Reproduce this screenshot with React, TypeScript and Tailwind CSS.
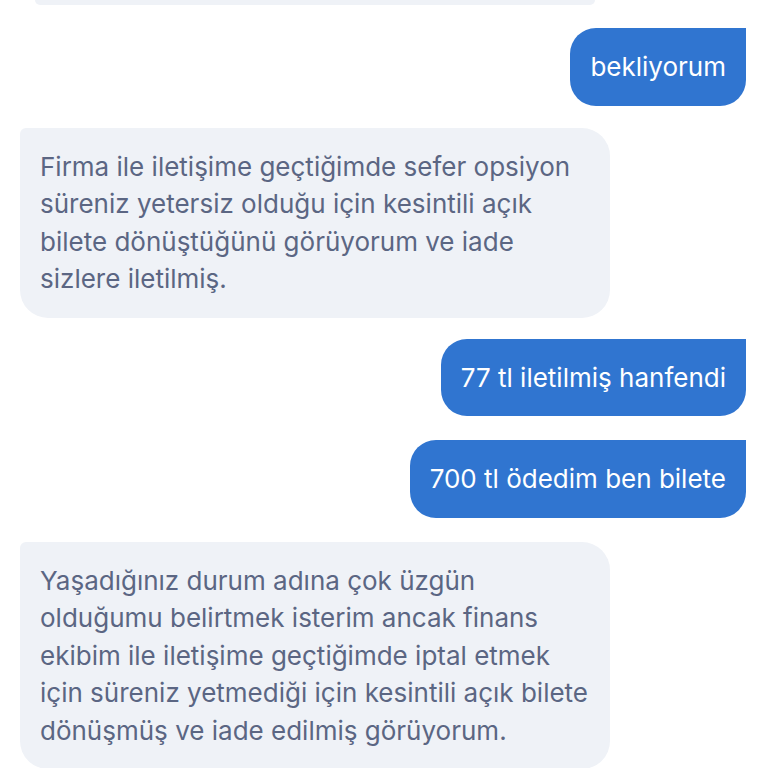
type Msg = { from: 'agent' | 'user'; text: string; mt: string }

const messages: Msg[] = [
  { from: 'user', text: 'bekliyorum', mt: 'mt-[23px]' },
  {
    from: 'agent',
    text: 'Firma ile iletişime geçtiğimde sefer opsiyon süreniz yetersiz olduğu için kesintili açık bilete dönüştüğünü görüyorum ve iade sizlere iletilmiş.',
    mt: 'mt-[22px]',
  },
  { from: 'user', text: '77 tl iletilmiş hanfendi', mt: 'mt-[21px]' },
  { from: 'user', text: '700 tl ödedim ben bilete', mt: 'mt-[24px]' },
  {
    from: 'agent',
    text: 'Yaşadığınız durum adına çok üzgün olduğumu belirtmek isterim ancak finans ekibim ile iletişime geçtiğimde iptal etmek için süreniz yetmediği için kesintili açık bilete dönüşmüş ve iade edilmiş görüyorum.',
    mt: 'mt-[24px]',
  },
]

export default function App() {
  return (
    <div
      className="h-[768px] w-[768px] overflow-hidden bg-white"
      style={{ fontFamily: 'Inter, "Noto Sans", sans-serif' }}
    >
      <div className="flex flex-col">
        {/* önceki mesajın alt kenarı */}
        <div className="ml-[35px] h-[5px] w-[560px] rounded-b-[20px] bg-[#eff2f7]" />

        {messages.map((m, i) =>
          m.from === 'user' ? (
            <div key={i} className={`${m.mt} flex justify-end pr-[22px]`}>
              <div className="rounded-[26px] rounded-tr-none bg-[#3075d0] px-[20px] py-[20px] text-[26px] leading-[37.5px] text-white">
                {m.text}
              </div>
            </div>
          ) : (
            <div key={i} className={`${m.mt} flex justify-start pl-[20px]`}>
              <div className="w-[590px] rounded-[28px] rounded-tl-[6px] bg-[#eff2f7] px-[20px] py-[20px] text-[26px] leading-[37.5px] text-[#5b6683]">
                {m.text}
              </div>
            </div>
          ),
        )}
      </div>
    </div>
  )
}
